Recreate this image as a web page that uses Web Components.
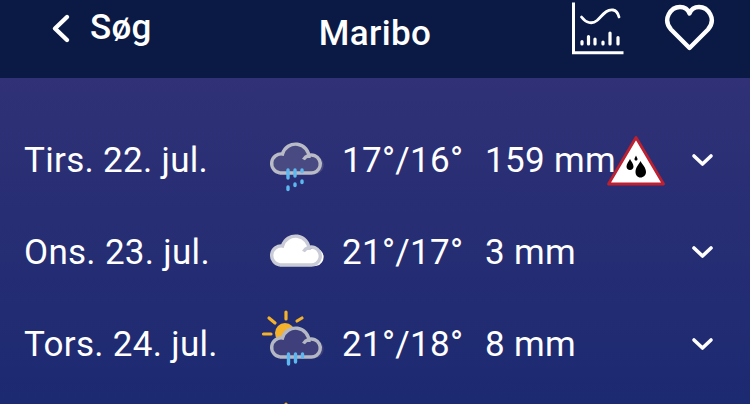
<!DOCTYPE html>
<html lang="da">
<head>
<meta charset="utf-8">
<title>Maribo</title>
<style>
  html, body { margin: 0; height: 404px; overflow: hidden; background: #1d2a70; }
  body { font-family: Roboto, "Liberation Sans", sans-serif; color: #fff; }
</style>
</head>
<body>
<vejr-app>
  <vejr-header slot="header" back="Søg" title="Maribo"></vejr-header>
  <vejr-row date="Tirs. 22. jul." icon="rain" temp="17°/16°" rain="159 mm" warning></vejr-row>
  <vejr-row date="Ons. 23. jul." icon="cloud" temp="21°/17°" rain="3 mm"></vejr-row>
  <vejr-row date="Tors. 24. jul." icon="sunrain" temp="21°/18°" rain="8 mm"></vejr-row>
  <vejr-row icon="sun"></vejr-row>
</vejr-app>

<script>
// app shell: header on top, rows below on the gradient
class VejrApp extends HTMLElement {
  constructor() {
    super();
    this.attachShadow({ mode: 'open' });
    this.shadowRoot.innerHTML = `
      <style>
        :host { display: block; width: 750px; height: 404px; overflow: hidden; }
        main {
          height: 326px;
          padding-top: 36px;
          box-sizing: border-box;
          background: linear-gradient(#303176, #1c2a71 100%);
        }
      </style>
      <slot name="header"></slot>
      <main><slot></slot></main>`;
  }
}

class VejrHeader extends HTMLElement {
  constructor() {
    super();
    this.attachShadow({ mode: 'open' });
  }
  connectedCallback() {
    this.shadowRoot.innerHTML = `
      <style>
        :host { display: grid; grid-template-columns: 1fr auto 1fr; height: 78px; background: #0a1a45; font-size: 35px; }
        .left, .right { display: flex; align-items: flex-start; }
        .left { padding-left: 50px; gap: 18px; }
        .left svg { margin-top: 12px; }
        .left span { margin-top: 8px; line-height: 40px; font-weight: 500; letter-spacing: 0.3px; }
        .title { font-weight: 500; line-height: 40px; margin-top: 14px; letter-spacing: 0.4px; }
        .right { justify-content: flex-end; padding-right: 35px; gap: 39px; }
        svg { display: block; fill: none; stroke: #fff; stroke-linecap: round; stroke-linejoin: round; }
      </style>
      <div class="left">
        <svg width="22" height="32" viewBox="0 0 22 32"><path d="M17 5 L5 16.5 L17 28" stroke-width="4.4"/></svg>
        <span>${this.getAttribute('back')}</span>
      </div>
      <div class="title">${this.getAttribute('title')}</div>
      <div class="right">
        <svg width="60" height="60" viewBox="15 0 60 60">
          <path d="M23.5 2.5 V52.7 H73.5" stroke-width="3" stroke-linecap="butt" stroke-linejoin="miter"/>
          <path d="M31.5 17 C36 23 42 24.5 47 20.5 C52 16 56 9 63 10 C66 10.5 68 13 69 17" stroke-width="2.8"/>
          <path d="M32 41.5 V44 M38.5 36.5 V44 M45 39 V44 M53 42 V44 M60 33 V44 M68 37.5 V44" stroke-width="3.2"/>
        </svg>
        <svg width="51" height="60" viewBox="115 0 51 60">
          <path d="M140.5 48 L122 29.5 C113 19 122 7 131 7 C135.5 7 139 9.5 140.5 13.5 C142 9.5 145.500 7 150 7 C159 7 168 19 159 29.5 Z" stroke-width="4.4"/>
        </svg>
      </div>`;
  }
}

// weather glyphs, all on the same 70x70 box
const CLOUD_LINE = 'M25 43 H55.500 A9 9 0 1 0 48.500 29.500 M54 28 A13.500 13.500 0 0 0 27.500 24 A9.500 9.500 0 0 0 25 43';
const CLOUD_FILL = 'M25 43 H55.500 A9 9 0 1 0 54 28 A13.500 13.500 0 0 0 27.500 24 A9.500 9.500 0 0 0 25 43 Z';

function cloud(fill, line) {
  return `<g transform="translate(0 5)">
    <path d="${CLOUD_FILL}" fill="${fill}"/>
    <path d="${CLOUD_LINE}" fill="none" stroke="${line}" stroke-width="3.400"/>
  </g>`;
}
function sun() {
  return `<circle cx="30" cy="24" r="10" fill="#f3b12c"/>
    <path d="M31 3 V10 M14 9 L20 14 M47 9 L42 12 M8.500 25 H16" stroke="#f3b12c" stroke-width="3.200" stroke-linecap="round" fill="none"/>`;
}
function drops(list) {
  return `<g stroke="#5db8f0" stroke-width="3.400" stroke-linecap="round" fill="none">
    ${list.map(d => `<path d="${d}"/>`).join('')}
  </g>`;
}
const ICONS = {
  rain: cloud('#4a4a82', '#b9bcc6') + drops(['M33 45 V53', 'M40 45 V51', 'M47 45 V46.500', 'M33 62 V64.500', 'M40 59 V60.500', 'M47 56 V57.500']),
  cloud: cloud('#fff', '#c9ccd6'),
  sunrain: sun() + cloud('#3f3f7c', '#b4b8c4') + drops(['M33.500 45 V55', 'M40.500 45 V53', 'M47.500 45 V48']),
  sun: sun()
};

class VejrIcon extends HTMLElement {
  constructor() {
    super();
    this.attachShadow({ mode: 'open' });
  }
  connectedCallback() {
    this.shadowRoot.innerHTML = `
      <style>
        :host { display: block; width: 70px; height: 70px; }
        svg { display: block; }
      </style>
      <svg width="70" height="70" viewBox="0 0 70 70">${ICONS[this.getAttribute('name')] || ''}</svg>`;
  }
}

class VejrRow extends HTMLElement {
  constructor() {
    super();
    this.attachShadow({ mode: 'open' });
  }
  connectedCallback() {
    const date = this.getAttribute('date') || '';
    const temp = this.getAttribute('temp') || '';
    const rain = this.getAttribute('rain') || '';
    const warn = this.hasAttribute('warning') ? `
      <svg class="warn" width="60" height="56" viewBox="0 0 60 56">
        <path d="M31 3.500 L3.500 50 H58.500 Z" fill="#fff" stroke="#bd2030" stroke-width="2.800" stroke-linejoin="round"/>
        <path d="M35.500 27 C37.500 31 41 33.500 41 38 C41 41 38.500 43.500 35.500 43.500 C32.500 43.500 30.500 41 30.500 38 C30.500 33.500 33.500 31 35.500 27 Z" fill="#000"/>
        <path d="M25 25 C26 27.500 28.500 29.500 28.500 32.500 C28.500 34.500 27 36 25 36 C23 36 21.500 34.500 21.500 32.500 C21.500 29.500 24 27.500 25 25 Z" fill="#000"/>
        <path d="M31 21.500 C31.500 23 32.500 24 32.500 25 C32.500 26 32 26.500 31 26.500 C30 26.500 29.500 26 29.500 25 C29.500 24 30.500 23 31 21.500 Z" fill="#000"/>
      </svg>` : '';
    const chevron = date ? `
      <svg class="chev" width="26" height="18" viewBox="0 0 26 18"><path d="M4 5 L12.500 13 L21 5" fill="none" stroke="#fff" stroke-width="3.600" stroke-linecap="round" stroke-linejoin="round"/></svg>` : '';
    this.shadowRoot.innerHTML = `
      <style>
        :host {
          display: grid;
          grid-template-columns: 231px 70px 160px 205px 26px;
          align-items: center;
          height: 92px;
          padding-left: 24px;
          font-size: 35px;
          letter-spacing: 0.3px;
          white-space: nowrap;
        }
        .temp { padding-left: 17px; }
        .rain { position: relative; }
        .warn { position: absolute; left: 120px; top: -6px; }
        svg { display: block; }
      </style>
      <div class="date">${date}</div>
      <vejr-icon name="${this.getAttribute('icon')}"></vejr-icon>
      <div class="temp">${temp}</div>
      <div class="rain">${rain}${warn}</div>
      ${chevron}`;
  }
}

customElements.define('vejr-app', VejrApp);
customElements.define('vejr-header', VejrHeader);
customElements.define('vejr-icon', VejrIcon);
customElements.define('vejr-row', VejrRow);
</script>
</body>
</html>
